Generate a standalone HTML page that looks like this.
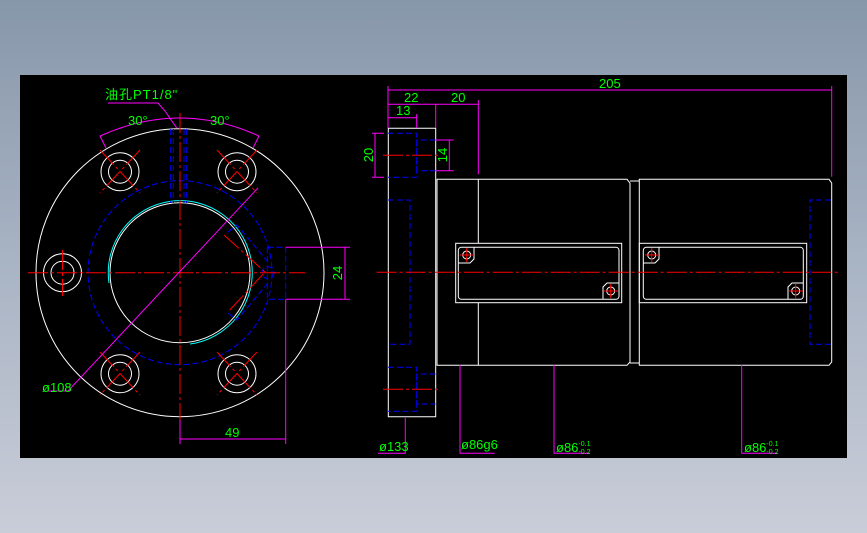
<!DOCTYPE html>
<html><head><meta charset="utf-8"><style>
html,body{margin:0;padding:0;width:867px;height:533px;overflow:hidden;background:linear-gradient(#8797aa,#a9b4c4 50%,#c9cdd8);}
svg{position:absolute;left:0;top:0}
text{font-family:"Liberation Sans Narrow","Liberation Sans","Noto Sans CJK SC",sans-serif;fill:#0f0;font-size:13px}
</style></head><body>
<svg width="867" height="533" viewBox="0 0 867 533">
<rect x="20" y="75" width="827" height="383" fill="#000"/>
<g fill="none" stroke-width="1">
<!-- left view -->
<g stroke="#fff">
<circle cx="180" cy="272.7" r="144"/>
<circle cx="180" cy="272.7" r="70"/>
<circle cx="120" cy="171.7" r="19"/><circle cx="120" cy="171.7" r="11.5"/>
<circle cx="237" cy="171.7" r="19"/><circle cx="237" cy="171.7" r="11.5"/>
<circle cx="62.5" cy="272.7" r="19"/><circle cx="62.5" cy="272.7" r="11.5"/>
<circle cx="120" cy="373.7" r="19"/><circle cx="120" cy="373.7" r="11.5"/>
<circle cx="237" cy="373.7" r="19"/><circle cx="237" cy="373.7" r="11.5"/>
</g>
<path d="M109 283 A72 72 0 1 1 190 344" stroke="#0ff"/>
<g stroke="#00f" stroke-dasharray="6 3">
<circle cx="180" cy="272.7" r="92"/>
<path d="M170.7 129V203M173.3 129V203M184 129V203M186.7 129V203"/>
<rect x="267.3" y="247.3" width="18.4" height="52"/>
<path d="M228 232L237 225L268 262M228 313L237 320L268 283"/>
<circle cx="268" cy="272.7" r="6"/>
</g>
<g stroke="#f00" stroke-dasharray="20 3 3 3">
<path d="M28 272.7H305M180 113V420"/>
<path d="M100 150L140 193M140 150L100 193M217 150L257 193M257 150L217 193M100 352L140 395M140 352L100 395M217 352L257 395M257 352L217 395M62.5 250V296"/>
<path d="M224 235L265 272L228 312"/>
</g>
<g stroke="#f0f">
<path d="M48 391H68L258 188"/>
<path d="M108 103H158L165 111L176.7 128"/>
<path d="M100 136Q180 100 259 136"/>
<path d="M100 136L106 148M259 136L253 148"/>
<path d="M285.7 247.3H350M285.7 299.3H350M345 247.3V299.3"/>
<path d="M180 420V444M285.7 299.3V444M180 439H285.7"/>
</g>
<text x="105" y="99" font-size="8" letter-spacing="1">油孔PT1/8"</text>
<text x="128" y="125">30°</text>
<text x="210" y="125">30°</text>
<text x="42" y="392">ø108</text>
<text x="225" y="437">49</text>
<text transform="translate(342,273) rotate(-90)" text-anchor="middle">24</text>
<!-- right view -->
<g stroke="#fff">
<path d="M388.3 128.3H435.7V416.7H388.3Z"/>
<path d="M437 179.3H627L630 183V362L627 365.3H437Z"/>
<path d="M630 181H639.3M630 363H639.3"/>
<path d="M639.3 179.3H829L831.7 183V362L829 365.3H639.3Z"/>
<path d="M478.3 179.3V243.3M478.3 302.7V365.3"/>
<rect x="455.7" y="243.3" width="166" height="59.4"/>
<rect x="458.3" y="247.3" width="160.7" height="52" rx="3"/>
<rect x="639.3" y="243.3" width="167.4" height="59.4"/>
<rect x="643.3" y="247.3" width="160" height="52" rx="3"/>
<circle cx="466.7" cy="255" r="4"/><circle cx="610.7" cy="291" r="4"/>
<circle cx="651.7" cy="255" r="4"/><circle cx="795.7" cy="291" r="4"/>
<path d="M458.3 263H470L474 259V247.3M619 283H607L603 287V299.3M643.3 263H655L659 259V247.3M803.3 283H792L788 287V299.3"/>
</g>
<g stroke="#00f" stroke-dasharray="6 3">
<path d="M388 133.3H416.7V177.3H388M435.7 140H416.7V170.7H435.7"/>
<path d="M388 367.3H416.7V411.3H388M435.7 374H416.7V404H435.7"/>
<path d="M388 200H410V344.3H388M831 200H810V344.3H831"/>
</g>
<g stroke="#f00" stroke-dasharray="20 3 3 3">
<path d="M376.7 272.3H838M383 155.3H440M383 389.3H440"/>
<path d="M460 255H474M466.7 248V262M604 291H618M610.7 284V298M645 255H659M651.7 248V262M789 291H803M795.7 284V298"/>
</g>
<g stroke="#f0f">
<path d="M388 86V128M831.7 86V176.7M388 90H831.7"/>
<path d="M388 104.3H478.3M435.7 104V128M478.3 100V174.3"/>
<path d="M388 117.7H416.7M416.7 114V128"/>
<path d="M372 133.3H384M372 177.3H384M375 133.3V177.3"/>
<path d="M435.7 140H453.7M435.7 170.7H453.7M449.3 140V170.7"/>
<path d="M405.3 418V453.3H378M460 365V453.3H494.7M554 365V453.3H589.7M741.7 365V453.3H777.7"/>
</g>
<text x="599" y="88">205</text>
<text x="404" y="102">22</text>
<text x="451" y="102">20</text>
<text x="396" y="115">13</text>
<text transform="translate(373,155) rotate(-90)" text-anchor="middle">20</text>
<text transform="translate(447,155) rotate(-90)" text-anchor="middle">14</text>
<text x="379" y="451">ø133</text>
<text x="461" y="449">ø86g6</text>
<text x="556" y="452">ø86<tspan font-size="7" dy="-6">-0.1</tspan><tspan font-size="7" dx="-12" dy="8">-0.2</tspan></text>
<text x="744" y="452">ø86<tspan font-size="7" dy="-6">-0.1</tspan><tspan font-size="7" dx="-12" dy="8">-0.2</tspan></text>
</g>
</svg>
</body></html>
